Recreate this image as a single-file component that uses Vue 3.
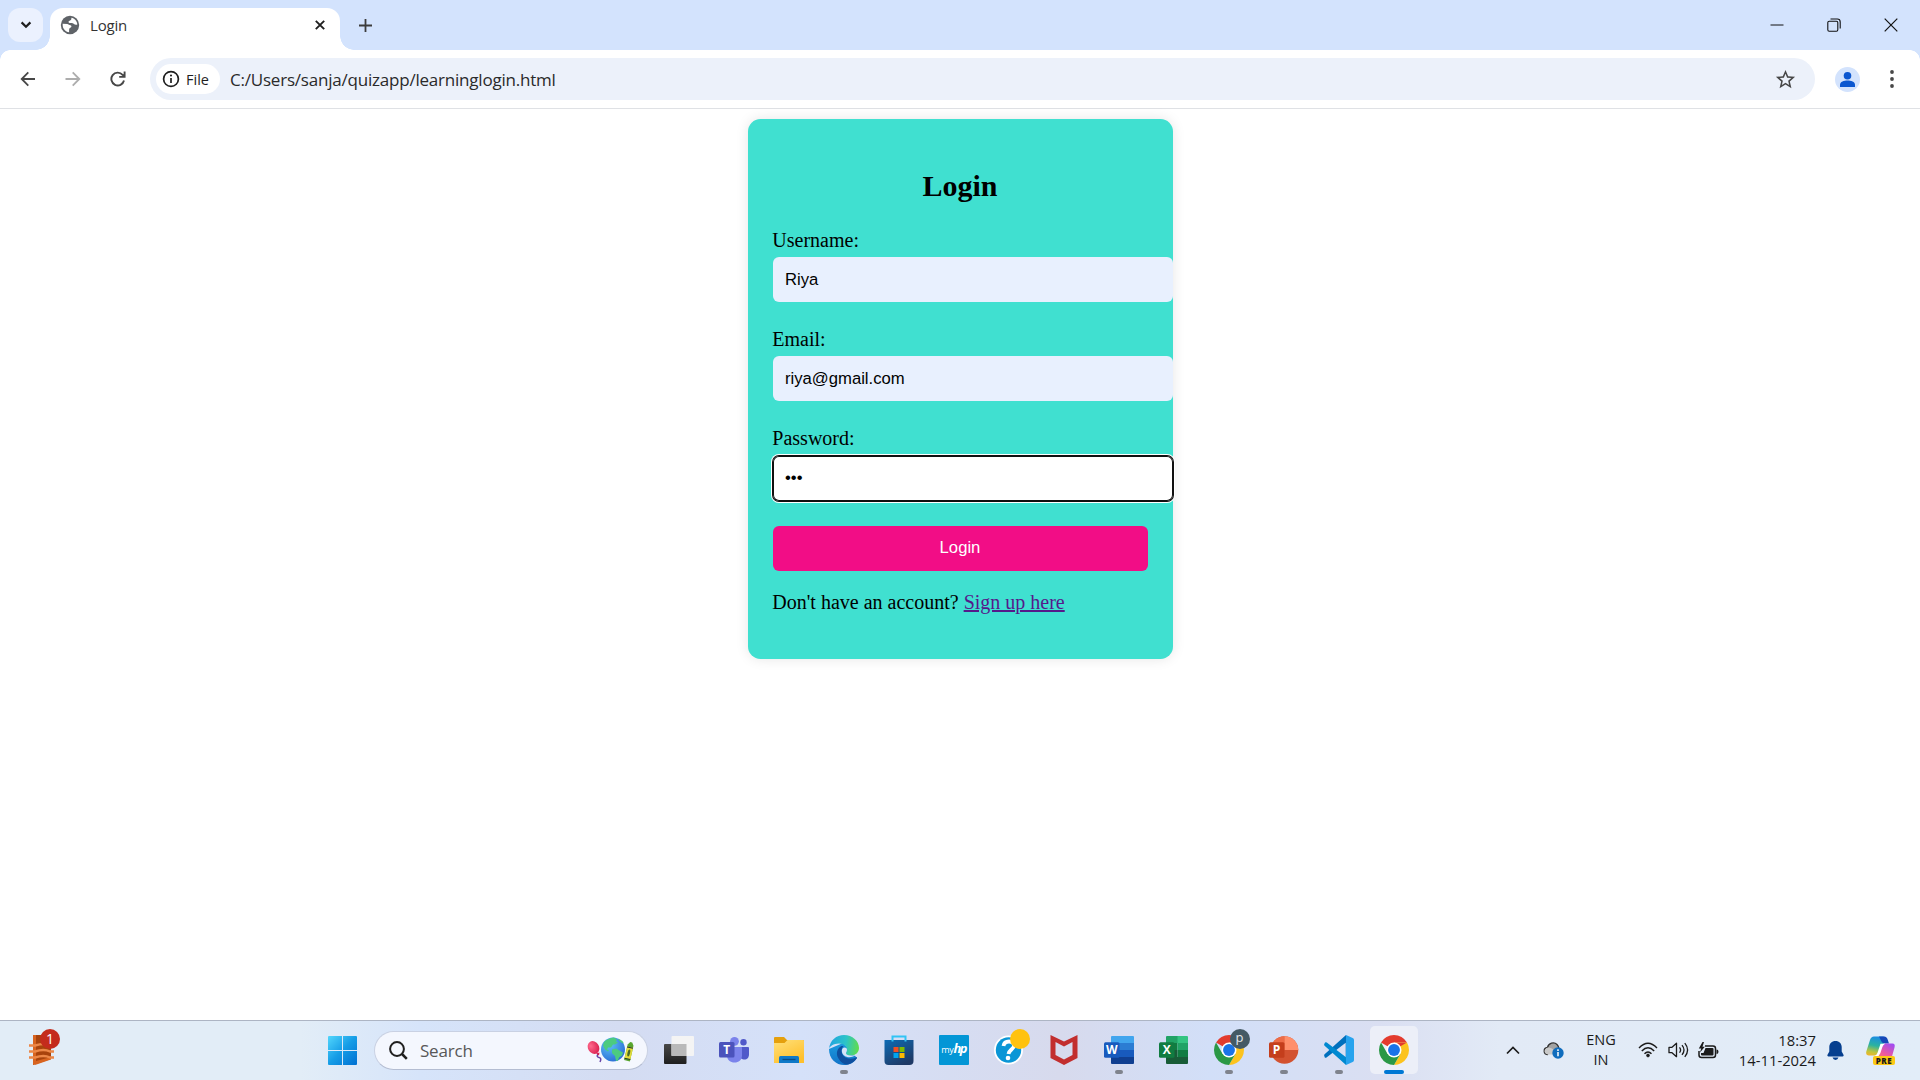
<script setup>
const apps = [
  { id: 'taskview' },
  { id: 'teams' },
  { id: 'files' },
  { id: 'edge', running: true },
  { id: 'store' },
  { id: 'myhp' },
  { id: 'help', dot: true },
  { id: 'mcafee' },
  { id: 'word', running: true },
  { id: 'excel' },
  { id: 'chrome', running: true, letter: 'p' },
  { id: 'powerpoint', running: true },
  { id: 'vscode', running: true },
  { id: 'chrome', active: true },
]
</script>

<template>
  <div class="screen">
    <header class="tabstrip">
      <div class="tabsearch">
        <svg width="12" height="8" viewBox="0 0 12 8"><path d="M1.6 1.4 6 5.8l4.4-4.4" fill="none" stroke="#1f1f1f" stroke-width="2.2" /></svg>
      </div>
      <div class="tab">
        <svg class="globe" width="22" height="22" viewBox="0 0 24 24"><circle cx="12" cy="12" r="10" fill="#5f6368" /><path fill="#fff" d="M4 10.500l5 .3c1.500.2 2 1.200 3.500 1.400 1.700.3 1.300 2.300-.2 2.800-1.300.5-1.300 1.500-1.300 4.900C7 19.500 4 16 4 12zM13.500 4.200c3.500.6 6.200 3.800 6.500 7.300-1.500.7-3 .2-4-.8-1.200-1-3-.4-4.500-.8-1.600-.5-1.500-2.200 0-2.600 1.700-.4 2.200-1.300 2-3.100z" /></svg>
        <span class="tab-title">Login</span>
        <svg class="tab-close" width="10" height="10" viewBox="0 0 10 10"><path d="M.8.8l8.400 8.400M9.200.8.8 9.200" stroke="#1f1f1f" stroke-width="1.900" /></svg>
      </div>
      <svg class="newtab" width="13" height="13" viewBox="0 0 13 13"><path d="M6.500 0v13M0 6.500h13" stroke="#3c3c3c" stroke-width="1.800" /></svg>
      <div class="winctl">
        <svg width="14" height="14" viewBox="0 0 14 14"><path d="M.5 7h13" stroke="#111" stroke-width="1" /></svg>
        <svg width="14" height="14" viewBox="0 0 14 14" fill="none" stroke="#111" stroke-width="1.100"><rect x=".8" y="3.200" width="10" height="10" rx="1.400" /><path d="M3.500 1h6.800q2.900 0 2.900 2.900v6.600" /></svg>
        <svg width="14" height="14" viewBox="0 0 14 14"><path d="M.7.7l12.600 12.600M13.300.7.7 13.300" stroke="#111" stroke-width="1.200" /></svg>
      </div>
    </header>

    <nav class="toolbar">
      <svg width="16" height="16" viewBox="0 0 16 16" fill="none" stroke="#474747" stroke-width="1.800"><path d="M15 8H2M8.300 1.300 1.700 8l6.600 6.700" /></svg>
      <svg width="16" height="16" viewBox="0 0 16 16" fill="none" stroke="#adadad" stroke-width="1.800"><path d="M.5 8H14M7.700 1.300 14.300 8l-6.600 6.700" /></svg>
      <svg width="16" height="16" viewBox="0 0 16 16" fill="none" stroke="#474747" stroke-width="1.900"><path d="M14 9.500A6.400 6.400 0 1 1 12.600 3.800L14.300 5.400M14.600.5v5.400H9.200" /></svg>
      <div class="omnibox">
        <div class="chip">
          <svg width="18" height="18" viewBox="0 0 18 18"><circle cx="9" cy="9" r="7.400" fill="none" stroke="#1f1f1f" stroke-width="1.700" /><path d="M9 8v5" stroke="#1f1f1f" stroke-width="1.700" /><circle cx="9" cy="5.500" r="1.050" fill="#1f1f1f" /></svg>
          <span>File</span>
        </div>
        <span class="url">C:/Users/sanja/quizapp/learninglogin.html</span>
        <svg class="star" width="23" height="23" viewBox="0 0 24 24"><path fill="#474747" d="M22 9.240l-7.190-.62L12 2 9.190 8.630 2 9.240l5.460 4.730L5.820 21 12 17.270 18.180 21l-1.630-7.030L22 9.240zM12 15.400l-3.760 2.270 1-4.280-3.320-2.880 4.380-.38L12 6.100l1.710 4.040 4.380.38-3.320 2.880 1 4.280L12 15.400z" /></svg>
      </div>
      <svg class="avatar" width="25" height="25" viewBox="0 0 25 25"><circle cx="12.500" cy="12.500" r="12.500" fill="#d3e3fd" /><circle cx="12.500" cy="8.800" r="3.800" fill="#0b57d0" /><path d="M5 20v-2.200c0-3 4-4.300 7.500-4.300s7.500 1.300 7.500 4.300V20z" fill="#0b57d0" /></svg>
      <svg class="dots" width="4" height="18" viewBox="0 0 4 18" fill="#474747"><circle cx="2" cy="2" r="1.900" /><circle cx="2" cy="9" r="1.900" /><circle cx="2" cy="16" r="1.900" /></svg>
    </nav>

    <main class="page">
      <section class="card">
        <h2>Login</h2>
        <div class="group">
          <div class="label">Username:</div>
          <div class="field">Riya</div>
        </div>
        <div class="group">
          <div class="label">Email:</div>
          <div class="field">riya@gmail.com</div>
        </div>
        <div class="group last">
          <div class="label">Password:</div>
          <div class="field focused">•••</div>
        </div>
        <button type="button">Login</button>
        <p>Don't have an account? <a>Sign up here</a></p>
      </section>
    </main>

    <footer class="taskbar">
      <div class="widget">
        <svg width="26" height="32" viewBox="0 0 26 32"><path d="M4 1h18v24L4 31z" fill="#a8430c" /><path d="M4 1h3v29l-3 1z" fill="#d8641f" /><path d="M7 27l15-4v2.500L6 31z" fill="#d8641f" /><path d="M0 11.500h6q10-3 16 0h3M0 17.500h6q9-3 15 0h4M0 23.500h6q9-3 15 0h4" fill="none" stroke="#ec8747" stroke-width="2.400" /></svg>
        <span class="count">1</span>
      </div>
      <div class="start">
        <svg width="29" height="29" viewBox="0 0 29 29">
          <defs><linearGradient id="win" gradientUnits="userSpaceOnUse" x1="0" y1="0" x2="29" y2="29"><stop offset="0" stop-color="#52d6fc" /><stop offset=".5" stop-color="#159ce6" /><stop offset="1" stop-color="#0070d2" /></linearGradient></defs>
          <path fill="url(#win)" d="M1 0h13v14H0V1q0-1 1-1zM15 0h13q1 0 1 1v13H15zM0 15h14v14H1q-1 0-1-1zM15 15h14v13q0 1-1 1H15z" />
        </svg>
      </div>
      <div class="search">
        <svg width="19" height="19" viewBox="0 0 19 19" fill="none" stroke="#1f1f1f"><circle cx="8" cy="8" r="6.900" stroke-width="2" /><path d="M13 13l4.800 4.800" stroke-width="2.500" /></svg>
        <span>Search</span>
        <svg class="toys" width="48" height="26" viewBox="0 0 48 26">
          <defs>
            <radialGradient id="globe" cx=".35" cy=".3" r=".8"><stop offset="0" stop-color="#5fc2f7" /><stop offset="1" stop-color="#2868d4" /></radialGradient>
            <radialGradient id="balloon" cx=".35" cy=".3" r=".8"><stop offset="0" stop-color="#ff6a8d" /><stop offset="1" stop-color="#d81b4b" /></radialGradient>
          </defs>
          <path d="M11 17q-2 3 1 3.500t1 4.500" fill="none" stroke="#6744a8" stroke-width="1.500" />
          <ellipse cx="6.500" cy="10.500" rx="5.500" ry="6.700" transform="rotate(-30 6.500 10.500)" fill="url(#balloon)" /><path d="M9 16.500l3.500-1-.5 3z" fill="#d81b4b" />
          <circle cx="26" cy="12.500" r="12" fill="url(#globe)" />
          <path d="M17 5q4-4 10-4.500l3 2-1 2 2 1-3 2-2 0-2 3-3 0-1 2 2 1-1 1-3-2-2-4zM31 1.500q4 1.500 6 5l-3-1-2-2zM25 12.500l4-1 5 3 2 1-1 3-3 2-1 3-2 .5-1-5-3-3z" fill="#4ccb80" />
          <g transform="rotate(13 42 15)"><path d="M39 8l2-3h2l2 3v16h-6z" fill="#58a52e" /><path d="M39 10h6v12h-6z" fill="#e4dc3a" /><path d="M39 10.500h6M39 22h6" stroke="#26382c" stroke-width="1" /><ellipse cx="42" cy="16" rx="1.300" ry="3.500" fill="#4c6b28" /></g>
        </svg>
      </div>

      <div class="apps">
        <div v-for="(app, i) in apps" :key="i" class="slot" :class="{ active: app.active }">
          <svg v-if="app.id === 'taskview'" width="30" height="30" viewBox="0 0 30 30"><defs><linearGradient id="tvd" x1="0" y1="0" x2="0" y2="1"><stop stop-color="#484848" /><stop offset="1" stop-color="#1f1f1f" /></linearGradient></defs><rect y="9" width="22.500" height="20" rx="1" fill="url(#tvd)" /><rect x="7.500" y="1" width="22.500" height="20" rx="1" fill="#f4f4f4" /><path d="M7.500 9h15v12h-15z" fill="#b9b9b9" /></svg>

          <svg v-else-if="app.id === 'teams'" width="30" height="30" viewBox="0 0 30 30"><circle cx="24.500" cy="7.300" r="3.200" fill="#5059c9" /><path d="M20 12h9q1 0 1 1v6.500c0 3-2 5-4.500 5S20 23 20 20z" fill="#5059c9" /><circle cx="15.500" cy="6.300" r="4.400" fill="#7b83eb" /><path d="M8 12h14.500q.5 0 .5 1v7.500c0 4.500-3.500 7-7.500 7S8 25 8 20.500z" fill="#7b83eb" /><rect y="7" width="15.500" height="15.500" rx="1.500" fill="#4b53bc" /><text x="7.700" y="19" class="glyph">T</text></svg>

          <svg v-else-if="app.id === 'files'" width="30" height="30" viewBox="0 0 30 30"><defs><linearGradient id="fold" x1="0" y1="0" x2=".6" y2="1"><stop stop-color="#ffe07a" /><stop offset="1" stop-color="#ffc02c" /></linearGradient></defs><path d="M0 3q0-1 1-1h9l3 3h16q1 0 1 1v10H0z" fill="#e5a00d" /><path d="M0 8h10.500l3-3H29q1 0 1 1v22H0z" fill="url(#fold)" /><path d="M5 28v-5.500q0-1.500 1.500-1.500h17q1.500 0 1.500 1.500V28z" fill="#0f79c8" /><path d="M8.500 24.500h13" stroke="#0a4c85" stroke-width="1.300" /></svg>

          <svg v-else-if="app.id === 'edge'" width="30" height="30" viewBox="0 0 30 30"><defs><linearGradient id="e1" x1="0" y1=".4" x2="1" y2=".5"><stop stop-color="#22a4e0" /><stop offset=".55" stop-color="#2cc4c8" /><stop offset="1" stop-color="#60dc4c" /></linearGradient><linearGradient id="e2" x1="0" y1="0" x2="0" y2="1"><stop stop-color="#1c9bdf" /><stop offset="1" stop-color="#1273c8" /></linearGradient></defs><path d="M0 14C0 24 7 30 15 30c6 0 10-2.500 13-7L14 8z" fill="url(#e2)" /><path d="M0 14C1 5 7.500 0 15 0c8.500 0 15 6 15 13 0 4.500-3.500 7.500-8 7.500-3.500 0-5-1.300-5-2.300 0-.8 1-1.400 1-3.700 0-3-3-6-8-6-5.500 0-9.500 3-10 5.500z" fill="url(#e1)" /><path d="M12.500 11c-4.500 2-6 8-3 12.500C12 28 16 30 19 29.500c4-.8 7-3.500 9-6.500.3-.7-.2-1-1-.6-6 3-13.500.5-14.300-5.400-.3-2.400.3-4.500 1.800-6z" fill="#0f4f9f" /><path d="M18 14.500c0-1.800-2.500-2.800-4-1.500-2 1.800-1.300 5.700 1.500 7.800 3 2.200 8 2.200 12.500-1.800-2 1.200-4 1.500-6 1.500-3.500 0-5-1.300-5-2.300 0-.8 1-1.400 1-3.700z" fill="#d6e2f8" /></svg>

          <svg v-else-if="app.id === 'store'" width="30" height="30" viewBox="0 0 30 30"><defs><linearGradient id="st" x1="0" y1="0" x2=".6" y2="1"><stop stop-color="#0d6bb5" /><stop offset="1" stop-color="#1f3a66" /></linearGradient></defs><path d="M.5 5h29v21q0 4-4 4h-21q-4 0-4-4z" fill="url(#st)" /><path d="M8.500 6.500v-5h13v5" fill="none" stroke="#31c4f5" stroke-width="2" /><path d="M9.500 12h5v5h-5z" fill="#f25022" /><path d="M15.500 12h5v5h-5z" fill="#7fba00" /><path d="M9.500 18h5v5h-5z" fill="#00a4ef" /><path d="M15.500 18h5v5h-5z" fill="#ffb900" /></svg>

          <svg v-else-if="app.id === 'myhp'" width="30" height="30" viewBox="0 0 30 30"><rect width="30" height="30" rx="1" fill="#0396d6" /><text x="2.300" y="17.500" class="my">my</text><text x="14.500" y="18" class="hp">hp</text></svg>

          <svg v-else-if="app.id === 'help'" width="30" height="30" viewBox="0 0 30 30"><circle cx="14.500" cy="15" r="14.500" fill="#fff" /><circle cx="14.500" cy="15" r="12.700" fill="#0a96d6" /><path d="M9.500 11c.5-3.500 3-4.500 5.500-4.500 3 0 5 1.700 5 4 0 3.700-5 4.300-5.500 8.500" fill="none" stroke="#fff" stroke-width="3.800" /><circle cx="14" cy="23" r="2.300" fill="#fff" /></svg>

          <svg v-else-if="app.id === 'mcafee'" width="30" height="30" viewBox="0 0 30 30"><path d="M1.500 0L15 6.500 28.500 0v23L15 30 1.500 23zM6.500 7v13L15 24.500 23.500 20V7L15 11.500z" fill="#c22e2e" fill-rule="evenodd" /></svg>

          <svg v-else-if="app.id === 'word'" width="30" height="30" viewBox="0 0 30 30"><path d="M8 1h21q1 0 1 1v6H7V2q0-1 1-1z" fill="#41a5ee" /><path d="M7 8h23v7H7z" fill="#2b7cd3" /><path d="M7 15h23v7H7z" fill="#185abd" /><path d="M7 22h23v6q0 1-1 1H8q-1 0-1-1z" fill="#103f91" /><rect y="7.200" width="15.500" height="15.500" rx="1.500" fill="#185abd" /><text x="7.700" y="19" class="glyph">W</text></svg>

          <svg v-else-if="app.id === 'excel'" width="30" height="30" viewBox="0 0 30 30"><path d="M8 1h11v7H7V2q0-1 1-1z" fill="#21a366" /><path d="M18.500 1H28q1 0 1 1v6H18.500z" fill="#33c481" /><path d="M7 8h11.500v7H7z" fill="#107c41" /><path d="M18.500 8H29v7H18.500z" fill="#21a366" /><path d="M7 15h11.500v7H7z" fill="#185c37" /><path d="M18.500 15H29v7H18.500z" fill="#107c41" /><path d="M7 22h22v6q0 1-1 1H8q-1 0-1-1z" fill="#185c37" /><rect y="7.200" width="15.500" height="15.500" rx="1.500" fill="#107c41" /><text x="7.700" y="19" class="glyph">X</text></svg>

          <svg v-else-if="app.id === 'powerpoint'" width="30" height="30" viewBox="0 0 30 30"><circle cx="15.500" cy="15" r="13.800" fill="#d35230" /><path d="M15.500 1.200v13.800H1.700A13.800 13.800 0 0 1 15.500 1.200z" fill="#ed6c47" /><path d="M15.500 1.200A13.800 13.800 0 0 1 29.300 15H15.500z" fill="#ff8f6b" /><rect y="7.200" width="15.500" height="15.500" rx="1.500" fill="#c43e1c" /><text x="7.500" y="19" class="glyph">P</text></svg>

          <svg v-else-if="app.id === 'vscode'" width="30" height="30" viewBox="0 0 30 30"><path d="M21.700 22.300V7.700L2.500 22.500q-1 .6-1.700-.1L.3 21q-.5-1 .3-1.700L22 0l1 30z" fill="#0070bd" /><path d="M22 7.700v14.600L2.800 7.500q-1-.6-1.800.1L.3 9q-.5 1 .3 1.700L22 30V22z" fill="#0089d1" /><path d="M22 0l6.700 3q1.300.6 1.300 2v20q0 1.400-1.300 2L22 30z" fill="#27a3ee" /></svg>

          <svg v-else width="30" height="30" viewBox="0 0 48 48"><path d="M24 24L3.220 12A24 24 0 0 1 44.780 12H24z" fill="#e33b2e" /><path d="M44.780 12A24 24 0 0 1 24 48L34.390 30 24 12z" fill="#fcc31e" /><path d="M24 48A24 24 0 0 1 3.220 12L13.610 30 34.390 30z" fill="#2a9846" /><path d="M24 12h20.780L34.400 18z" fill="#e33b2e" /><circle cx="24" cy="24" r="12" fill="#fff" /><circle cx="24" cy="24" r="9.500" fill="#1a73e8" /></svg>

          <span v-if="app.dot" class="badge amber"></span>
          <span v-if="app.letter" class="badge slate">{{ app.letter }}</span>
          <span v-if="app.running" class="pip"></span>
          <span v-if="app.active" class="pip wide"></span>
        </div>
      </div>

      <div class="tray">
        <svg class="up" width="14" height="9" viewBox="0 0 14 9"><path d="M1 7.500l6-6 6 6" fill="none" stroke="#1b1b1b" stroke-width="1.700" /></svg>
        <svg class="cloud" width="21" height="18" viewBox="0 0 21 18"><path d="M5 13.500c-5 0-5-6.500-.5-7C5.500 2 11 .5 14 3.500c2 2 2 3.500 2 4.500" fill="#a3a3a3" stroke="#333" stroke-width="1.300" /><path d="M5 13.500c-4.500-.5-4.500-6 0-7 3-.5 5 2 8 4l-3 3z" fill="#c9c9c9" /><circle cx="15" cy="12" r="5.700" fill="#0f6cbd" /><path d="M15 11v4.300M15 8.300v1.600" stroke="#fff" stroke-width="1.500" /></svg>
        <div class="lang">ENG<br />IN</div>
        <svg class="wifi" width="20" height="16" viewBox="0 0 20 16" fill="none" stroke="#1b1b1b" stroke-width="1.400"><path d="M1 6Q10-3.500 19 6M3.800 9q6.200-6.400 12.400 0M6.500 11.800q3.500-3.600 7 0" /><circle cx="10" cy="13.500" r="1.400" fill="#1b1b1b" stroke-width=".8" /></svg>
        <svg class="vol" width="21" height="16" viewBox="0 0 21 16" fill="none" stroke="#1b1b1b" stroke-width="1.300"><path d="M1 5.300h3L8.500 1.300v13.400L4 10.700H1z" stroke-linejoin="round" /><path d="M11.500 5.300q2.200 2.700 0 5.400M14 3.200q4 4.800 0 9.600M16.800 1.200q5.600 6.800 0 13.600" /></svg>
        <svg class="batt" width="21" height="17" viewBox="0 0 21 17"><path d="M7 4h8q2.500 0 2.500 2.500V13q0 2.500-2.500 2.500H3.500Q1 15.500 1 13V9" fill="none" stroke="#1b1b1b" stroke-width="1.500" /><path d="M7.500 6h7q1 0 1 1v5.500q0 1-1 1H4q-1 0-1-1V11h2.500z" fill="#1b1b1b" /><path d="M18.500 7.500q2 0 2 2.200t-2 2.300zM4.500 0L.8 6.500h2.400L2 10.500 6.800 4.800H4.500L6 0z" fill="#1b1b1b" /></svg>
        <div class="clock">18:37<br />14-11-2024</div>
        <svg class="bell" width="17" height="19" viewBox="0 0 17 19"><path d="M8.500 0C4.800 0 2.300 2.600 2.300 6v4.500L.4 14q-.4 1.400 1 1.400h14.200q1.400 0 1-1.400l-1.900-3.500V6c0-3.400-2.500-6-6.200-6zM5.500 16.500h6q-.8 2.400-3 2.400t-3-2.400z" fill="#063f8f" /></svg>
        <div class="copilot">
          <svg width="30" height="28" viewBox="0 0 30 28"><defs><linearGradient id="cp1" x1=".4" y1="0" x2=".2" y2="1"><stop stop-color="#1c8ee0" /><stop offset=".45" stop-color="#2bb3a0" /><stop offset=".8" stop-color="#c2c53a" /><stop offset="1" stop-color="#f0b429" /></linearGradient><linearGradient id="cp2" x1=".8" y1="0" x2=".2" y2="1"><stop stop-color="#a24cf0" /><stop offset=".5" stop-color="#ee5a9c" /><stop offset="1" stop-color="#fb8a55" /></linearGradient></defs><path d="M8 .5h9q3 0 2.200 3L15 15q-1.300 4-4 4.500H3q-3.500 0-2.700-4L4 4Q5 .5 8 .5z" fill="url(#cp1)" /><path d="M13 .5h5q3 0 4 4l1 3h-4q-3 0-4-3z" fill="#1648b8" /><path d="M19 7.500h7.500q3 0 2 4L25 24q-1 3.500-4 3.500h-9q-4 0-5-5.500l4-1.500q2-1 3-4l2-6q1-3 3-3z" fill="url(#cp2)" /><path d="M14.500 7.800h4.500q-2 1-2.700 3.500l-2 6q-1.200 3-3.500 3H8q2.500-.5 3.500-3.500z" fill="#fff" /></svg>
          <span>PRE</span>
        </div>
      </div>
    </footer>
  </div>
</template>

<style>
body {
  margin: 0;
  background: #fff;
  overflow: hidden;
}
</style>

<style scoped>
.screen {
  width: 1920px;
  height: 1080px;
  display: flex;
  flex-direction: column;
  background: #fff;
  font-family: "Open Sans", "Noto Sans", sans-serif;
  overflow: hidden;
}
svg {
  display: block;
  flex: none;
}
.tabstrip {
  height: 50px;
  box-sizing: border-box;
  padding: 8px 22px 0 8px;
  display: flex;
  align-items: flex-start;
  background: #d3e3fd;
}
.tabsearch {
  width: 35px;
  height: 34px;
  border-radius: 12px;
  background: #ebf1fe;
  display: flex;
  align-items: center;
  justify-content: center;
}
.tab {
  position: relative;
  width: 290px;
  height: 42px;
  box-sizing: border-box;
  margin-left: 7px;
  padding: 0 15px 8px 9px;
  display: flex;
  align-items: center;
  border-radius: 13px 13px 0 0;
  background: #fff;
}
.tab::before,
.tab::after {
  content: "";
  position: absolute;
  bottom: 0;
  width: 14px;
  height: 14px;
}
.tab::before {
  left: -14px;
  background: radial-gradient(circle at 0 0, transparent 13.5px, #fff 14px);
}
.tab::after {
  right: -14px;
  background: radial-gradient(circle at 100% 0, transparent 13.5px, #fff 14px);
}
.tab-title {
  margin-left: 9px;
  flex: 1;
  font-size: 15px;
  letter-spacing: -0.2px;
  color: #333;
}
.newtab {
  margin: 11px 0 0 19px;
}
.winctl {
  margin: 9.5px 0 0 auto;
  display: flex;
  gap: 43px;
}
.toolbar {
  height: 59px;
  box-sizing: border-box;
  padding: 1px 26px 1px 20px;
  border-bottom: 1px solid #dfe1e5;
  display: flex;
  align-items: center;
  gap: 29px;
  background:
    radial-gradient(circle at 10px 10px, #fff 9.5px, #d3e3fd 10px) 0 0 / 10px 10px no-repeat,
    radial-gradient(circle at 0 10px, #fff 9.5px, #d3e3fd 10px) 100% 0 / 10px 10px no-repeat,
    #fff;
}
.omnibox {
  width: 1665px;
  height: 42px;
  box-sizing: border-box;
  margin-left: -5px;
  padding: 0 18px 0 6px;
  border-radius: 21px;
  background: #ecf1fa;
  display: flex;
  align-items: center;
}
.chip {
  width: 64px;
  height: 30px;
  box-sizing: border-box;
  padding-left: 6px;
  border-radius: 15px;
  background: #fff;
  display: flex;
  align-items: center;
  gap: 6px;
  font-size: 14.5px;
  color: #1f1f1f;
}
.url {
  margin-left: 10px;
  padding-top: 1px;
  font-size: 17px;
  letter-spacing: -0.21px;
  color: #2a2a2a;
  white-space: nowrap;
}
.star {
  margin-left: auto;
}
.avatar {
  margin-left: -9px;
}
.dots {
  margin-left: 1px;
}
.page {
  flex: 1;
  display: flex;
  justify-content: center;
  align-items: flex-start;
  padding-top: 10px;
}
.card {
  width: 425px;
  height: 540px;
  box-sizing: border-box;
  padding: 25px;
  border-radius: 12.5px;
  background: #40e0d0;
  box-shadow: 0 0 12.5px rgba(0, 0, 0, 0.1);
  font-family: "Liberation Serif", serif;
  font-size: 20px;
  color: #000;
  margin-left: 1px;
}
h2 {
  margin: 25px 1px 25px 0;
  font-size: 30px;
  line-height: 34px;
  text-align: center;
}
.group {
  height: 99px;
}
.group.last {
  height: 100px;
}
.label {
  height: 28px;
  padding-top: 1px;
  margin-left: -0.7px;
  line-height: 23px;
}
.last .label {
  height: 29px;
}
.field {
  width: 400px;
  height: 45px;
  box-sizing: border-box;
  padding: 0 12px;
  border-radius: 6px;
  background: #e8f0fe;
  font: 16.67px/45px "Liberation Sans", Arial, sans-serif;
}
.focused {
  background: #fff;
  line-height: 43px;
  box-shadow: 0 0 0 1px #101010, inset 0 0 0 1px #101010, 0 0 0 2px #fff;
}
button {
  display: block;
  width: 375px;
  height: 45px;
  margin: 0;
  padding: 0 1px 2px 0;
  border: 0;
  border-radius: 6px;
  background: #f20d86;
  color: #fff;
  font: 16.67px "Liberation Sans", Arial, sans-serif;
}
p {
  margin: 20px 0 0 -0.7px;
  line-height: 23px;
}
a {
  color: #551a8b;
  text-decoration: underline;
}
.taskbar {
  height: 60px;
  box-sizing: border-box;
  padding-bottom: 1px;
  border-top: 1px solid #adb5c4;
  display: flex;
  align-items: center;
  background: linear-gradient(90deg, #e2edf7 0, #e2edf7 300px, #d6e4fa 420px, #d4dcf2 620px, #d5e1f9 800px, #d7daed 1060px, #d2dff8 1210px, #dadff2 1380px, #e2eaf6 1500px, #e2edf8 1920px);
}
.widget {
  position: relative;
  width: 26px;
  margin: -1px 0 0 29px;
}
.count {
  position: absolute;
  left: 11px;
  top: -5px;
  width: 20px;
  height: 20px;
  border-radius: 50%;
  background: #c42b1c;
  color: #fff;
  font-size: 14px;
  line-height: 20px;
  text-align: center;
}
.start {
  margin: 1px 0 0 273px;
}
.search {
  width: 274px;
  height: 39px;
  box-sizing: border-box;
  margin-left: 17px;
  padding: 0 12px 0 14px;
  border: 1px solid #c9d1e3;
  border-bottom-color: #b4bdd2;
  border-radius: 20px;
  background: #f4f7fe;
  display: flex;
  align-items: center;
  font-size: 17px;
  color: #585858;
}
.search span {
  margin-left: 12px;
  letter-spacing: -0.2px;
}
.toys {
  margin-left: auto;
}
.apps {
  display: flex;
  margin-left: 3.5px;
  height: 58px;
  align-items: center;
}
.slot {
  position: relative;
  width: 55px;
  height: 48px;
  display: flex;
  align-items: center;
  justify-content: center;
}
.slot.active::before {
  content: "";
  position: absolute;
  inset: 0 3.5px;
  border-radius: 5px;
  background: #eceff8;
}
.slot svg {
  position: relative;
}
.badge {
  position: absolute;
  left: 28px;
  top: 3px;
  width: 20px;
  height: 20px;
  border-radius: 50%;
  text-align: center;
  font-size: 13px;
  line-height: 17px;
}
.amber {
  background: #ffc20e;
}
.slate {
  background: #455a64;
  color: #e3e8ea;
}
.pip {
  position: absolute;
  left: 23.5px;
  bottom: 0;
  width: 8px;
  height: 4px;
  border-radius: 2px;
  background: #7f838d;
}
.pip.wide {
  left: 17.5px;
  width: 20px;
  background: #0078d4;
}
.glyph {
  font: bold 12px "Open Sans", sans-serif;
  fill: #fff;
  text-anchor: middle;
}
.my {
  font: 9px "Open Sans", sans-serif;
  fill: #fff;
  letter-spacing: -0.3px;
}
.hp {
  font: italic bold 13px "Open Sans", sans-serif;
  fill: #fff;
  letter-spacing: -1.5px;
}
.tray {
  margin-left: auto;
  display: flex;
  align-items: center;
  font-size: 14.5px;
  line-height: 20px;
  color: #1b1b1b;
}
.cloud {
  margin-left: 23px;
}
.lang {
  width: 40px;
  margin-left: 17px;
  text-align: center;
}
.wifi {
  margin-left: 17px;
}
.vol {
  margin-left: 10px;
}
.batt {
  margin-left: 9px;
}
.clock {
  width: 90px;
  margin-left: 7px;
  text-align: right;
  font-size: 14.8px;
}
.bell {
  margin-left: 11px;
}
.copilot {
  position: relative;
  margin: 0 24px 0 22px;
}
.copilot span {
  position: absolute;
  left: 7px;
  bottom: -1px;
  width: 22px;
  height: 9px;
  border-radius: 2px;
  background: #fcc914;
  color: #1b1b1b;
  font-size: 8px;
  font-weight: 800;
  line-height: 9px;
  letter-spacing: 0.6px;
  text-align: center;
}
</style>
